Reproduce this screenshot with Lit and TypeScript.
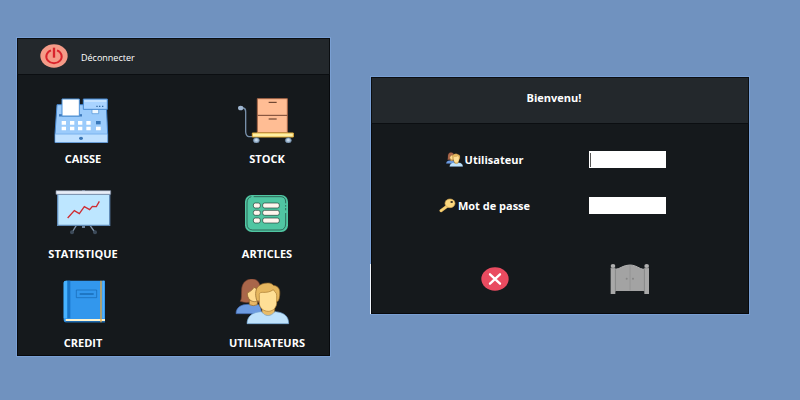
import { LitElement, html, css, svg } from "lit";
import { customElement } from "lit/decorators.js";

const people = svg`
  <path d="M48 131C48 112 64 103 84 103H114C122 108 124 118 124 131Z" fill="#6d9be0" stroke="#3f67ad" stroke-width="2"/>
  <path d="M61 94C66 86 64 74 65 61C65 42 75 29 92 27C108 26 116 33 119 44V97H87C78 98 69 97 61 94Z" fill="#a9664a" stroke="#7a4330" stroke-width="2"/>
  <path d="M88 90H112V104Q100 110 88 104Z" fill="#e8b765" stroke="#8a6127" stroke-width="2"/>
  <path d="M82 69C90 65 98 60 102 52L116 60V90C108 97 98 96 90 90C84 84 82 77 82 69Z" fill="#ffdb8f" stroke="#8a6127" stroke-width="2"/>
  <path d="M126 112H164V132Q145 146 126 132Z" fill="#e8bc68" stroke="#8a6127" stroke-width="2"/>
  <path d="M81 161C82 139 96 127 124 125Q144 149 165 125C194 127 206 140 206 161Z" fill="#bfe2fb" stroke="#75a9da" stroke-width="2"/>
  <path d="M111 93C105 78 106 61 112 52C119 43 131 39 143 39C151 38 157 42 160 46C178 48 181 61 179 77Q178 88 174 94Z" fill="#e6b75f" stroke="#8a6127" stroke-width="2"/>
  <path d="M118 77C117 72 119 67 126 67C139 68 151 66 160 59C163 66 170 66 170 77V101C168 116 156 124 145 124C131 124 119 114 118 101Z" fill="#ffdf96" stroke="#a8792f" stroke-width="2"/>`;

const tiles = [
  {
    name: "CAISSE",
    box: "9 30 240 144",
    art: svg`
      <path d="M51 59H199L203 146V173H45V146Z" fill="#9bcbfb" stroke="#4382c9" stroke-width="3"/>
      <path d="M46 148H202V172H46Z" fill="#bfe0ff"/>
      <path d="M46 147H202" stroke="#6ba8e8" stroke-width="2"/>
      <path d="M57 91H126" stroke="#3d79bb" stroke-width="7"/>
      <path d="M66 42H118V93H66Z" fill="#fff" stroke="#4d91d6" stroke-width="3"/>
      <path d="M156 72H176V86H156Z" fill="#eef7ff" stroke="#4d91d6" stroke-width="2"/>
      <path d="M130 42H202V73H130Z" fill="#a9d3ff" stroke="#4688cf" stroke-width="3"/>
      <path d="M133 48H199" stroke="#d4eaff" stroke-width="4"/>
      <path d="M169 64h4M177 64h4M186 64h4" stroke="#32679f" stroke-width="4"/>
      <path d="M65 108h13v11h-13zM90 108h13v11h-13zM114 108h13v11h-13zM139 108h13v11h-13zM65 125h13v11h-13zM90 125h13v11h-13zM114 125h13v11h-13zM139 125h13v11h-13zM168 125h14v11h-14z" fill="#fff"/>
      <path d="M168 108h14v10h-14z" fill="#3978ba"/>
      <ellipse cx="123" cy="160" rx="6" ry="5" fill="#3975b6"/>`,
  },
  {
    name: "STOCK",
    box: "9 30 240 144",
    art: svg`
      <path d="M51 69H58Q65 70 65 80V141Q66 153 74 155H85" fill="none" stroke="#7890aa" stroke-width="4"/>
      <ellipse cx="50" cy="69" rx="8" ry="7" fill="#9fb6d0"/>
      <path d="M100 41H190V143H100Z" fill="#ffbd94" stroke="#a46548" stroke-width="3"/>
      <path d="M101 91H190" stroke="#71432f" stroke-width="3"/>
      <path d="M134 52H158M134 102H158" stroke="#54301f" stroke-width="3"/>
      <path d="M85 144H208V156H85Z" fill="#fff0a4" stroke="#e0ae3c" stroke-width="3"/>
      <g fill="#9eb7d0" stroke="#5f7892" stroke-width="2"><ellipse cx="97" cy="166" rx="9" ry="8"/><ellipse cx="193" cy="166" rx="9" ry="8"/></g>
      <g fill="#c8daeb"><circle cx="97" cy="165" r="4"/><circle cx="193" cy="165" r="4"/></g>`,
  },
  {
    name: "STATISTIQUE",
    box: "9 30 240 144",
    art: svg`
      <path d="M109 136L97 156M150 136L164 156" stroke="#8194a8" stroke-width="4"/>
      <g fill="#3c4a59"><circle cx="96" cy="157" r="6"/><circle cx="165" cy="157" r="6"/></g>
      <path d="M126 136h9v8h-9zM126 27h9v6h-9z" fill="#70859c"/>
      <path d="M53 43H209V136H53Z" fill="#bde6ff" stroke="#608bb7" stroke-width="4"/>
      <path d="M48 32H212V43H48Z" fill="#e7edf8" stroke="#7f8ba0" stroke-width="2"/>
      <path d="M83 114L103 92L118 101L133 80L149 89L157 79L169 80L178 64" fill="none" stroke="#cf2d33" stroke-width="4"/>`,
  },
  {
    name: "ARTICLES",
    box: "9 30 240 144",
    art: svg`
      <rect x="63" y="45" width="129" height="111" rx="20" fill="#50c6a2"/>
      <path d="M89 50H171Q185 51 185 66V70M185 75V80M185 84V91M185 99V132Q184 150 168 150H86Q69 149 69 132V69Q69 53 82 50" fill="none" stroke="#1c3c36" stroke-width="2"/>
      <g fill="#fff5ed" stroke="#1e3934" stroke-width="2">
        <rect x="88" y="69" width="21" height="15" rx="6"/><rect x="116" y="69" width="50" height="15" rx="6"/>
        <rect x="88" y="91" width="21" height="15" rx="6"/><rect x="116" y="91" width="50" height="15" rx="6"/>
        <rect x="88" y="114" width="21" height="15" rx="6"/><rect x="116" y="114" width="50" height="15" rx="6"/>
      </g>`,
  },
  {
    name: "CREDIT",
    box: "9 27 240 144",
    art: svg`
      <path d="M71 38Q71 32 78 32H195V157H76Q71 156 71 149Z" fill="#3297ed"/>
      <path d="M71 38Q71 32 78 32H82V145H71Z" fill="#46b2ff"/>
      <path d="M82 32H91V145H82Z" fill="#1976c8"/>
      <path d="M77 147H195V153H77Z" fill="#fff4cf"/>
      <path d="M77 155H195" stroke="#1e68ad" stroke-width="4"/>
      <path d="M109 60H170V83H109Z" fill="none" stroke="#1667b0" stroke-width="2"/>
      <path d="M119 72H161" stroke="#1667b0" stroke-width="4"/>
      <path d="M183 32V157" stroke="#e9a63b" stroke-width="4"/>
      <path d="M190 32V145" stroke="#53b2ff" stroke-width="5"/>`,
  },
  { name: "UTILISATEURS", box: "21 27 240 144", art: people },
];

@customElement("app-root")
export class AppRoot extends LitElement {
  static styles = css`
    :host {
      display: grid;
      grid-template-columns: 313fr 378fr;
      column-gap: 41px;
      align-items: start;
      box-sizing: border-box;
      min-height: 100vh;
      padding: 38px 51px 44px 17px;
      background: #7092bf;
      color: #fff;
      font-family: "Open Sans", "Noto Sans", sans-serif;
      font-size: 11px;
      line-height: 16px;
      font-weight: 700;
    }
    button {
      display: flex;
      align-items: center;
      padding: 0;
      border: 0;
      background: none;
      color: inherit;
      font: inherit;
      cursor: pointer;
    }
    svg {
      display: block;
      flex: none;
    }
    .panel {
      position: relative;
      background: #15191c;
      box-shadow: inset 0 0 0 1px #07090c, 0 0 0 1px #799fd3;
    }
    .bar {
      display: flex;
      align-items: center;
      box-sizing: border-box;
      margin: 0;
      border: 1px solid #0b0e11;
      background: #23282c;
    }
    .menu-bar {
      height: 37px;
      padding: 0 22px 2px;
    }
    .logout {
      gap: 13px;
      font-size: 9px;
      font-weight: 400;
    }
    .logout-text {
      padding-top: 4px;
    }
    .tiles {
      display: grid;
      grid-template-columns: 132fr 122fr;
      grid-template-rows: 95px 89px 72px;
      column-gap: 57px;
      align-items: start;
      padding: 20px 2px 5px 0;
    }
    .tile {
      flex-direction: column;
      gap: 8px;
    }
    .login {
      margin-top: 39px;
    }
    .login::before {
      content: "";
      position: absolute;
      left: -1px;
      bottom: 0;
      width: 1px;
      height: 50px;
      background: #f0f4fa;
    }
    .title {
      height: 47px;
      padding: 0 12px 6px 0;
      justify-content: center;
      font-size: 11px;
      line-height: 16px;
    }
    .fields {
      display: grid;
      grid-template-columns: 1fr 1fr;
      row-gap: 29px;
      align-items: center;
      justify-items: center;
      padding: 27px 50px 49px 42px;
    }
    .field {
      display: flex;
      align-items: center;
      gap: 2px;
      height: 16px;
    }
    .entry {
      box-sizing: border-box;
      width: 77px;
      height: 17px;
      padding: 0 3px;
      border: 0;
      border-radius: 0;
      background: #fff;
      font: 11px "Open Sans", sans-serif;
      outline: none;
    }
    .active {
      background: linear-gradient(#555, #555) 1px 2px / 1px 14px no-repeat #fff;
    }
    .actions {
      display: grid;
      grid-template-columns: 1fr 1fr;
      align-items: center;
      justify-items: center;
      padding: 0 52px 19px 56px;
    }
  `;

  render() {
    return html`
      <nav class="panel" aria-label="Menu">
        <div class="bar menu-bar">
          <button class="logout">
            <svg width="28" height="24" viewBox="0 0 84 72" aria-hidden="true">
              <ellipse cx="42" cy="36" rx="41" ry="35" fill="#f59b88" />
              <path d="M33 19A23 20 0 1 0 51 19" fill="none" stroke="#d9242c" stroke-width="6" />
              <path d="M42 11V41" stroke="#d9242c" stroke-width="7" />
            </svg>
            <span class="logout-text">Déconnecter</span>
          </button>
        </div>
        <div class="tiles">
          ${tiles.map(
            (t) => html`<button class="tile">
              <svg width="80" height="48" viewBox=${t.box} aria-hidden="true">${t.art}</svg>
              <span>${t.name}</span>
            </button>`
          )}
        </div>
      </nav>
      <form class="panel login" @submit=${(e: Event) => e.preventDefault()}>
        <h1 class="bar title">Bienvenu!</h1>
        <div class="fields">
          <label class="field" for="user">
            <svg width="17" height="15" viewBox="46 24 162 140" aria-hidden="true">${people}</svg>
            <span>Utilisateur</span>
          </label>
          <input class="entry active" id="user" type="text" />
          <label class="field" for="pass">
            <svg width="17" height="15" viewBox="0 0 51 45" aria-hidden="true">
              <path d="M28 22L6 38" stroke="#e6bb62" stroke-width="9" stroke-linecap="round" />
              <path d="M28 22L6 38" stroke="#f8d477" stroke-width="5" stroke-linecap="round" />
              <ellipse cx="33" cy="16" rx="15" ry="13" fill="#fbd87f" stroke="#d0a14f" stroke-width="2" />
              <ellipse cx="38" cy="12" rx="4" ry="3" fill="#3b3020" />
            </svg>
            <span>Mot de passe</span>
          </label>
          <input class="entry" id="pass" type="password" />
        </div>
        <div class="actions">
          <button type="button" aria-label="Annuler">
            <svg width="28" height="24" viewBox="0 0 84 72" aria-hidden="true">
              <ellipse cx="42" cy="36" rx="41" ry="35" fill="#e94b60" />
              <path d="M27 22L57 50M57 22L27 50" stroke="#fff" stroke-width="7" stroke-linecap="round" />
            </svg>
          </button>
          <button type="submit" aria-label="Entrer">
            <svg width="40" height="32" viewBox="418 24 120 96" aria-hidden="true">
              <path d="M434 43C449 42 457 30 477 30C498 30 504 42 521 43V108H434Z" fill="#a3a3a3" />
              <path d="M434 43C449 42 457 30 477 30C498 30 504 42 521 43" fill="none" stroke="#b0b0b0" stroke-width="3" />
              <path d="M478 31V106" stroke="#8e8e8e" stroke-width="2" />
              <path d="M420 38H434V117H420ZM521 38H535V117H521Z" fill="#a8a8a8" />
              <path d="M434 42V110M521 42V110" stroke="#909090" stroke-width="2" />
              <g fill="#b0b0b0"><ellipse cx="427" cy="33" rx="7" ry="6" /><ellipse cx="528" cy="33" rx="7" ry="6" /></g>
              <path d="M420 40H434M521 40H535" stroke="#8e8e8e" stroke-width="2" />
              <g fill="#858585"><circle cx="468" cy="71" r="3" /><circle cx="487" cy="71" r="3" /></g>
            </svg>
          </button>
        </div>
      </form>
    `;
  }
}
